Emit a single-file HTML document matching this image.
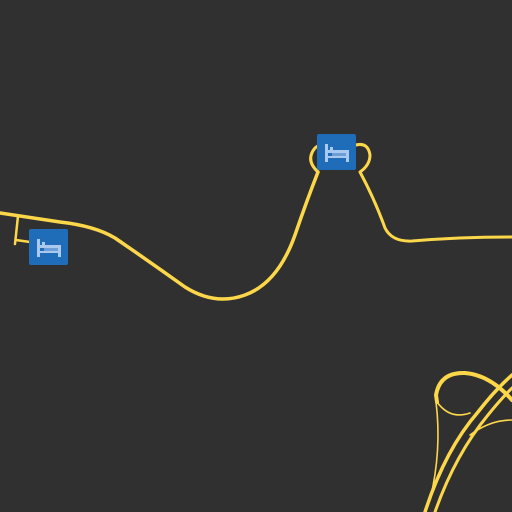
<!DOCTYPE html>
<html><head><style>html,body{margin:0;padding:0;background:#303030;width:512px;height:512px;overflow:hidden}</style></head>
<body>
<svg width="512" height="512" viewBox="0 0 512 512" xmlns="http://www.w3.org/2000/svg">
<rect width="512" height="512" fill="#303030"/>
<g fill="none" stroke="#fdd74a" stroke-linecap="round" stroke-linejoin="round">
<path d="M0 213 L60 222 Q95 226 115 238 Q150 262 185 287 Q215 306 245 295 Q278 283 295 235 Q307 200 318 172" stroke-width="3.5"/>
<path d="M18 216 L15 244 M16 240 L30 242" stroke-width="2.5"/>
<path d="M318 172 Q305 160 315 148 Q322 142 330 145 M356 145 Q368 142 370 155 Q370 165 360 172 Q375 200 385 228 Q392 242 412 241 Q460 237 512 237" stroke-width="3"/>
<path d="M425 512 Q445 450 478 412 Q495 390 512 375" stroke-width="3.5"/>
<path d="M435 512 Q455 455 488 415 Q500 400 512 388" stroke-width="3"/>
<path d="M512 400 Q490 375 465 373 Q440 372 436 395 L437 402" stroke-width="4"/>
<path d="M437 402 Q450 420 470 413 M436 402 Q442 450 430 500" stroke-width="1.6"/>
<path d="M470 435 Q490 420 512 420" stroke-width="1.6"/>
</g>
<g>
<rect x="29" y="229" width="39" height="36" rx="2" fill="#1f6cb8"/>
<g fill="#a9c9ee"><rect x="37" y="239" width="3" height="18"/><rect x="42" y="242" width="3" height="3"/><rect x="40" y="245" width="21" height="3"/><rect x="40" y="251" width="21" height="2"/><rect x="58" y="245" width="3" height="12"/></g>
<rect x="44" y="248" width="14" height="3" fill="#6d9fd6"/>
<rect x="317" y="134" width="39" height="36" rx="2" fill="#1f6cb8"/>
<g fill="#a9c9ee"><rect x="325" y="144" width="3" height="18"/><rect x="330" y="147" width="3" height="3"/><rect x="328" y="150" width="21" height="3"/><rect x="328" y="156" width="21" height="2"/><rect x="346" y="150" width="3" height="12"/></g>
<rect x="332" y="153" width="14" height="3" fill="#6d9fd6"/>
</g>
</svg>
</body></html>
